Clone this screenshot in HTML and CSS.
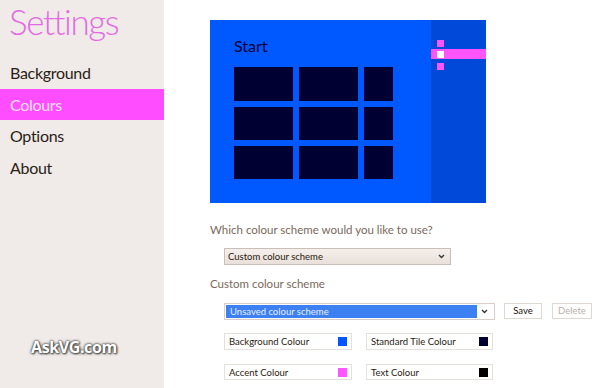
FILE: index.html
```html
<!DOCTYPE html>
<html>
<head>
<meta charset="utf-8">
<link rel="stylesheet" href="styles.css">
</head>
<body>
<div class="app">
  <aside class="sidebar">
    <h1 class="title">Settings</h1>
    <nav class="nav">
      <div class="nav-item">Background</div>
      <div class="nav-item active">Colours</div>
      <div class="nav-item">Options</div>
      <div class="nav-item">About</div>
    </nav>
    <div class="watermark">AskVG.com</div>
  </aside>
  <main class="main">
    <div class="preview">
      <div class="start">
        <div class="start-title">Start</div>
        <div class="tiles">
          <div class="tile"></div><div class="tile"></div><div class="tile"></div>
          <div class="tile"></div><div class="tile"></div><div class="tile"></div>
          <div class="tile"></div><div class="tile"></div><div class="tile"></div>
        </div>
      </div>
      <div class="charm">
        <div class="charm-row"><span class="dot"></span></div>
        <div class="charm-row sel"><span class="dot white"></span></div>
        <div class="charm-row"><span class="dot"></span></div>
      </div>
    </div>
    <div class="question">Which colour scheme would you like to use?</div>
    <div class="select sel1">
      <span class="select-text">Custom colour scheme</span>
      <svg class="chev" width="7" height="5" viewBox="0 0 7 5"><path d="M1 1 L3.5 3.5 L6 1" fill="none" stroke="#333" stroke-width="1.3"/></svg>
    </div>
    <div class="heading">Custom colour scheme</div>
    <div class="row">
      <div class="select sel2">
        <span class="select-text hl">Unsaved colour scheme</span>
        <svg class="chev" width="7" height="5" viewBox="0 0 7 5"><path d="M1 1 L3.5 3.5 L6 1" fill="none" stroke="#333" stroke-width="1.3"/></svg>
      </div>
      <div class="btn save">Save</div>
      <div class="btn del">Delete</div>
    </div>
    <div class="colours">
      <div class="cbox w1">Background Colour<span class="sw" style="background:#0055ff"></span></div>
      <div class="cbox w2">Standard Tile Colour<span class="sw" style="background:#000033"></span></div>
      <div class="cbox w1 short">Accent Colour<span class="sw" style="background:#ff55ff"></span></div>
      <div class="cbox w2 short">Text Colour<span class="sw" style="background:#050000"></span></div>
    </div>
  </main>
</div>
</body>
</html>
```
FILE: styles.css
```css
html, body {
  margin: 0;
  padding: 0;
  background: #ffffff;
}
body {
  font-family: Lato, "Open Sans", sans-serif;
  width: 600px;
  height: 388px;
  overflow: hidden;
}
.app {
  display: flex;
  height: 388px;
}
.sidebar {
  position: relative;
  width: 164px;
  flex: none;
  background: #f0ebe8;
}
.title {
  margin: 0;
  padding: 0 0 0 9px;
  font-size: 35px;
  font-weight: 300;
  line-height: 42px;
  letter-spacing: -1.4px;
  color: #e26ae2;
}
.nav {
  margin-top: 15px;
}
.nav-item {
  height: 32px;
  line-height: 31px;
  padding-left: 10px;
  font-size: 16px;
  letter-spacing: -0.3px;
  color: #2a1d16;
}
.nav-item.active {
  background: #ff4dff;
  color: #fbe0fb;
  height: 31px;
}
.watermark {
  position: absolute;
  left: 31px;
  top: 336px;
  font-family: "Open Sans", sans-serif;
  font-weight: 700;
  font-size: 16px;
  letter-spacing: -0.4px;
  color: #ffffff;
  text-shadow: 0 0 2px #333, 0 0 3px #555, 1px 1px 2px #444;
}
.main {
  padding: 20px 0 0 46px;
  flex: 1;
}
.preview {
  display: flex;
  width: 276px;
  height: 183px;
  background: #0059ff;
}
.start {
  flex: 1;
  padding: 15px 0 0 24px;
}
.start-title {
  font-size: 16px;
  line-height: 22px;
  color: #000033;
  height: 32px;
}
.tiles {
  display: grid;
  grid-template-columns: 59px 59px 29px;
  grid-template-rows: 34px 33px 33px;
  gap: 6px;
}
.tile {
  background: #000033;
}
.charm {
  width: 55px;
  background: #0049d9;
  padding-top: 20px;
}
.charm-row {
  height: 8px;
  padding-left: 6px;
  margin-bottom: 2px;
}
.charm-row.sel {
  height: 10px;
  background: #ff55ff;
  padding-top: 2px;
  box-sizing: border-box;
  margin-bottom: 4px;
}
.charm-row:first-child {
  margin-bottom: 1px;
}
.dot {
  display: block;
  width: 7px;
  height: 7px;
  background: #ff55ff;
}
.dot.white {
  background: #ffffff;
}
.question {
  margin-top: 18px;
  font-size: 11.5px;
  line-height: 17px;
  color: #7b685c;
}
.select {
  position: relative;
  display: flex;
  align-items: center;
  box-sizing: border-box;
  height: 17px;
  border: 1px solid #c9bfb8;
  font-size: 9.5px;
  color: #2a1a10;
}
.sel1 {
  margin: 10px 0 0 14px;
  width: 227px;
  background: linear-gradient(#f5efeb, #e9e0da);
  padding-left: 3px;
}
.sel2 {
  width: 271px;
  background: #ffffff;
  padding: 1px;
  border-color: #d8d0c8;
}
.select-text {
  flex: 1;
  line-height: 14px;
}
.select-text.hl {
  background: #3d80f2;
  color: #e8efff;
  padding-left: 4px;
  margin-right: 4px;
  height: 13px;
  line-height: 13px;
}
.chev {
  margin-right: 5px;
}
.heading {
  margin-top: 10px;
  font-size: 11.5px;
  line-height: 17px;
  color: #7b685c;
}
.row {
  display: flex;
  margin: 11px 0 0 14px;
}
.btn {
  box-sizing: border-box;
  height: 16px;
  border: 1px solid #ded8d3;
  font-size: 9.5px;
  line-height: 14px;
  text-align: center;
  background: #ffffff;
}
.save {
  margin-left: 9px;
  width: 38px;
  color: #1a1210;
}
.del {
  margin-left: 10px;
  width: 40px;
  color: #b8b0ab;
}
.colours {
  display: grid;
  grid-template-columns: 128px 127px;
  column-gap: 14px;
  row-gap: 14px;
  margin: 13px 0 0 14px;
}
.cbox {
  display: flex;
  align-items: center;
  justify-content: space-between;
  box-sizing: border-box;
  height: 17px;
  border: 1px solid #e6e0db;
  padding: 0 4px 0 4px;
  font-size: 9.5px;
  color: #2a1a10;
}
.cbox.short {
  height: 16px;
}
.sw {
  width: 9px;
  height: 9px;
}
```
